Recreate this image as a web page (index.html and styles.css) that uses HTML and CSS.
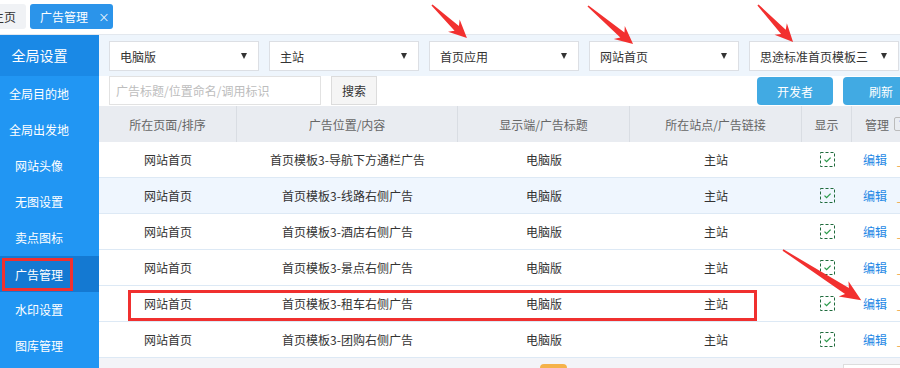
FILE: index.html
```html
<!DOCTYPE html>
<html lang="zh-CN">
<head>
    <meta charset="UTF-8">
    <title>广告管理</title>
    <link rel="stylesheet" href="styles.css">
</head>
<body>
    <!-- Tabs -->
    <div class="topbar">
        <div class="tab">主页</div>
        <div class="tab current">广告管理<span class="tab-close">×</span></div>
    </div>

    <div class="layout">
        <!-- Sidebar -->
        <div class="sidebar">
            <div class="side-title">全局设置</div>
            <div class="side-item">全局目的地</div>
            <div class="side-item">全局出发地</div>
            <div class="side-item">网站头像</div>
            <div class="side-item">无图设置</div>
            <div class="side-item">卖点图标</div>
            <div class="side-item active"><span class="mark">广告管理</span></div>
            <div class="side-item">水印设置</div>
            <div class="side-item">图库管理</div>
        </div>

        <!-- Main -->
        <div class="main">
            <div class="filter-bar">
                <div class="fake-select">电脑版<i class="caret"></i></div>
                <div class="fake-select">主站<i class="caret"></i></div>
                <div class="fake-select">首页应用<i class="caret"></i></div>
                <div class="fake-select">网站首页<i class="caret"></i></div>
                <div class="fake-select">思途标准首页模板三<i class="caret"></i></div>
            </div>
            <div class="tool-row">
                <input class="search-input" type="text" placeholder="广告标题/位置命名/调用标识">
                <button class="btn-search">搜索</button>
                <div class="tool-right">
                    <button class="btn-blue">开发者</button>
                    <button class="btn-blue">刷新</button>
                </div>
            </div>

            <div class="grid">
                <div class="row head">
                    <div class="cell">所在页面/排序</div>
                    <div class="cell">广告位置/内容</div>
                    <div class="cell">显示端/广告标题</div>
                    <div class="cell">所在站点/广告链接</div>
                    <div class="cell">显示</div>
                    <div class="cell manage">管理<span class="help">?</span></div>
                </div>
                <div id="rows"></div>
            </div>

            <div class="pager">
                <span class="page-cur"></span>
                <span class="page-box"></span>
            </div>
        </div>
    </div>

    <!-- Annotation arrows -->
    <svg class="arrows" width="900" height="368" viewBox="0 0 900 368">
        <g fill="#f2302f">
            <g transform="translate(432,5) rotate(43.3)">
                <polygon points="0,-0.8 34,-3.2 30,-8.5 48,0 30,8.5 34,3.2 0,0.8"/>
            </g>
            <g transform="translate(588,6) rotate(40.2)">
                <polygon points="0,-0.8 45,-3.2 41,-8.5 59,0 41,8.5 45,3.2 0,0.8"/>
            </g>
            <g transform="translate(758,5) rotate(46.6)">
                <polygon points="0,-0.8 37,-3.2 33,-8.5 51,0 33,8.5 37,3.2 0,0.8"/>
            </g>
            <g transform="translate(783,250) rotate(32.7)">
                <polygon points="0,-0.8 76,-3.6 72,-9 93,0 72,9 76,3.6 0,0.8"/>
            </g>
        </g>
    </svg>

    <script>
        // Ad slot rows
        const ads = ['导航下方通栏广告', '线路右侧广告', '酒店右侧广告', '景点右侧广告', '租车右侧广告', '团购右侧广告'];
        const check = '<svg width="15" height="15" viewBox="0 0 15 15"><rect x="0.5" y="0.5" width="14" height="14" fill="none" stroke="#1f6b3c" stroke-dasharray="3 2"/><path d="M4.5 7.6 L6.6 9.6 L10.6 5.6" fill="none" stroke="#2a9a4a" stroke-width="1.3"/></svg>';
        const rows = document.getElementById('rows');

        ads.forEach((name, i) => {
            const row = document.createElement('div');
            row.className = 'row' + (i === 1 ? ' alt' : '');
            row.innerHTML =
                '<div class="cell">网站首页</div>' +
                '<div class="cell">首页模板3-' + name + '</div>' +
                '<div class="cell">电脑版</div>' +
                '<div class="cell">主站</div>' +
                '<div class="cell">' + check + '</div>' +
                '<div class="cell manage"><a class="edit">编辑</a><span class="dash">_</span></div>' +
                (i === 4 ? '<div class="row-mark"></div>' : '');
            rows.appendChild(row);
        });
    </script>
</body>
</html>
```

FILE: styles.css
```css
/* General */
body {
    margin: 0;
    font-family: "Noto Sans CJK SC", "Noto Sans", sans-serif;
    font-size: 12px;
    color: #333;
    background: #fff;
    overflow: hidden;
    width: 900px;
    height: 368px;
    position: relative;
}

/* Tabs */
.topbar {
    height: 30px;
    border-bottom: 1px solid #e3e8ee;
    display: flex;
    gap: 4px;
    padding-top: 4px;
    margin-left: -18px;
}
.tab {
    height: 25px;
    line-height: 25px;
    padding: 0 10px;
    background: #f0f2f5;
    border-radius: 3px;
    color: #333;
    white-space: nowrap;
}
.tab.current {
    background: #2b94ea;
    color: #fff;
    padding: 0 6px 0 10px;
}
.tab-close {
    display: inline-block;
    width: 9px;
    margin-left: 10px;
    text-align: center;
    font-family: "DejaVu Sans", sans-serif;
    font-size: 14px;
    font-weight: 300;
}

.layout {
    display: flex;
}

/* Sidebar */
.sidebar {
    width: 99px;
    flex-shrink: 0;
    background: #2196f3;
    height: 333px;
    color: #fff;
}
.side-title {
    height: 41px;
    line-height: 41px;
    background: #1a89e6;
    font-size: 14px;
    text-align: center;
    padding-right: 20px;
}
.side-item {
    height: 36px;
    line-height: 36px;
    text-align: center;
    padding-right: 21px;
}
.side-item.active {
    background: #1479d2;
    text-align: left;
    padding: 0 0 0 2px;
    display: flex;
    align-items: center;
}
.mark {
    display: inline-block;
    height: 27px;
    line-height: 27px;
    padding: 0 7px 0 10px;
    border: 3px solid #f0302f;
}

/* Main */
.main {
    width: 830px;
    flex-shrink: 0;
}
.filter-bar {
    display: flex;
    gap: 10px;
    padding: 6px 10px 5px;
    background: #eef5fc;
}
.fake-select {
    width: 150px;
    height: 30px;
    box-sizing: border-box;
    border: 1px solid #dcdfe4;
    background: #fff;
    display: flex;
    align-items: center;
    justify-content: space-between;
    padding: 0 11px 0 10px;
    flex-shrink: 0;
}
.caret {
    width: 0;
    height: 0;
    border-left: 3px solid transparent;
    border-right: 3px solid transparent;
    border-top: 6px solid #333;
}
.tool-row {
    display: flex;
    height: 30px;
    padding: 0 10px;
}
.search-input {
    width: 212px;
    height: 29px;
    box-sizing: border-box;
    border: 1px solid #e2e2e2;
    padding: 0 6px;
    font-family: inherit;
    font-size: 12px;
    margin: 0;
}
.search-input::placeholder {
    color: #bdbdbd;
}
.btn-search {
    margin: 0 0 0 10px;
    width: 46px;
    height: 29px;
    background: #f5f5f5;
    border: 1px solid #dcdcdc;
    font-family: inherit;
    font-size: 12px;
    color: #333;
    padding: 0;
}
.tool-right {
    margin-left: auto;
    display: flex;
    gap: 10px;
    padding-top: 1px;
}
.btn-blue {
    width: 76px;
    height: 28px;
    border: none;
    border-radius: 4px;
    background: #41aae3;
    color: #fff;
    font-family: inherit;
    font-size: 12px;
    padding: 0;
}

/* Table */
.row {
    display: grid;
    grid-template-columns: 138px 221px 172px 172px 50px 1fr;
    height: 36px;
    box-sizing: border-box;
    border-bottom: 1px solid #dde9f5;
    position: relative;
}
.row.alt {
    background: #eff6fe;
}
.cell {
    display: flex;
    align-items: center;
    justify-content: center;
    white-space: nowrap;
}
.row.head {
    background: #e9ecf1;
    border-bottom: none;
    color: #666;
}
.row.head .cell {
    border-right: 1px solid #d9dde3;
}
.cell.manage {
    justify-content: flex-start;
    padding-left: 11px;
}
.row.head .cell.manage {
    padding-left: 13px;
}
.help {
    display: inline-block;
    width: 12px;
    height: 12px;
    line-height: 12px;
    border: 1px solid #bbb;
    border-radius: 2px;
    margin-left: 5px;
    text-align: center;
    color: #2b94ea;
    font-size: 10px;
}
.edit {
    color: #1e88e5;
}
.dash {
    color: #f0a030;
    margin-left: 10px;
}
.row-mark {
    position: absolute;
    left: 29px;
    top: 4px;
    width: 629px;
    height: 31px;
    box-sizing: border-box;
    border: 3px solid #f0302f;
}

/* Pager */
.pager {
    background: #f3f4f8;
    height: 10px;
    position: relative;
    overflow: hidden;
}
.page-cur {
    position: absolute;
    left: 441px;
    top: 6px;
    width: 27px;
    height: 22px;
    border-radius: 4px;
    background: #f5b24a;
}
.page-box {
    position: absolute;
    left: 744px;
    top: 6px;
    width: 60px;
    height: 22px;
    border: 1px solid #ddd;
    background: #fff;
}

/* Arrows */
.arrows {
    position: absolute;
    left: 0;
    top: 0;
    pointer-events: none;
}
```
